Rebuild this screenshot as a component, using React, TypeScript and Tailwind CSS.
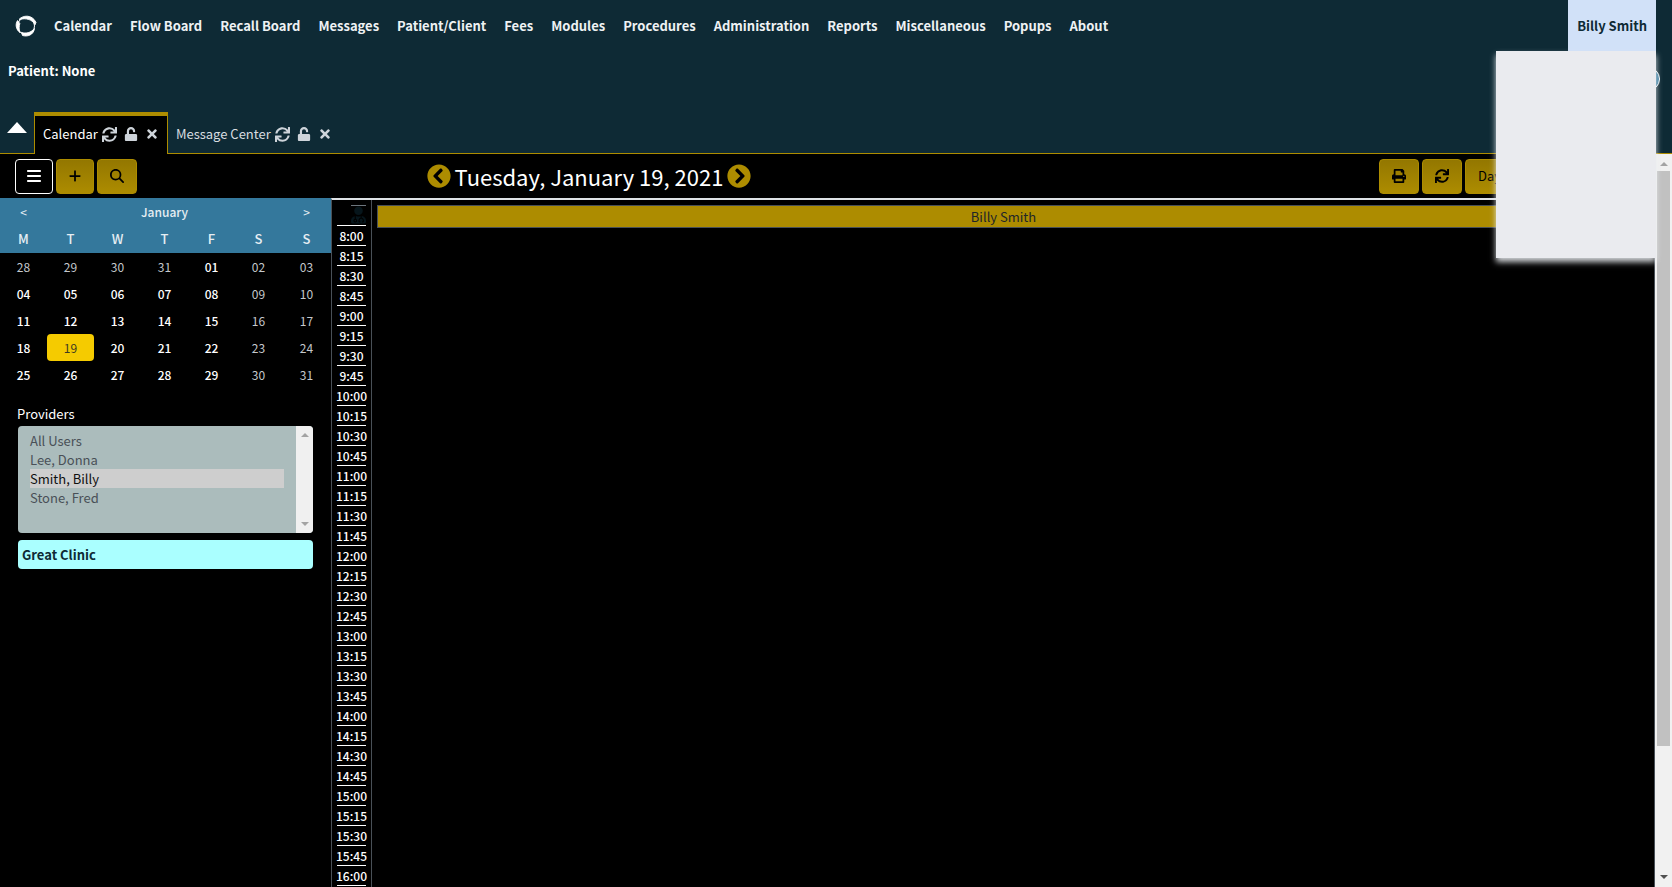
import React from "react";
import { FaSync, FaUnlock, FaTimes, FaPrint, FaUserMd, FaChevronCircleLeft, FaChevronCircleRight } from "react-icons/fa";
import { FaBars, FaPlus, FaMagnifyingGlass } from "react-icons/fa6";

const menu = [
  "Calendar", "Flow Board", "Recall Board", "Messages", "Patient/Client", "Fees", "Modules",
  "Procedures", "Administration", "Reports", "Miscellaneous", "Popups", "About",
];

const weeks = [
  ["28", "29", "30", "31", "01", "02", "03"],
  ["04", "05", "06", "07", "08", "09", "10"],
  ["11", "12", "13", "14", "15", "16", "17"],
  ["18", "19", "20", "21", "22", "23", "24"],
  ["25", "26", "27", "28", "29", "30", "31"],
];

const slots = Array.from({ length: 33 }, (_, i) => {
  const minutes = 8 * 60 + i * 15;
  return `${Math.floor(minutes / 60)}:${String(minutes % 60).padStart(2, "0")}`;
});

function dayClass(week: number, day: number) {
  if (week === 3 && day === 1) return "rounded bg-[#f5cb00] text-[#3d3a20]";
  if (day > 4 || (week === 0 && day < 4)) return "text-[#c4c8cc]";
  return "font-medium text-white";
}

function Logo() {
  return (
    <svg viewBox="0 0 24 24" className="size-6" fill="none" stroke="white">
      <circle cx="12" cy="12" r="8.500" strokeWidth="1" />
      <path d="M5 5.500C8.500 1.200 18 0 22 8.400L21 10.800C18.500 5.600 12.500 3.600 5 5.500Z" fill="white" strokeWidth="0.900" />
      <path d="M3.600 6.500C0.800 10.500 2.300 16 6 18.600C4.800 15 5 12.500 5.800 9.500Z" fill="white" strokeWidth="0.900" />
      <path d="M7.500 18.400C12 19.800 16.500 19 20.500 14.500C19.500 21 13.500 23 8.500 21.500Z" fill="white" strokeWidth="0.900" />
    </svg>
  );
}

function Tab({ label, active }: { label: string; active?: boolean }) {
  return (
    <div
      className={
        active
          ? "-mb-px flex h-[42px] items-center gap-1 border-x border-t-4 border-[#ad8c00] bg-black px-2 pb-[2px] text-white"
          : "flex h-[41px] items-center gap-1 border-t-4 border-transparent px-2 pb-px text-[#d8dde0]"
      }
    >
      <a href="#" className="leading-5">{label}</a>
      <div className="flex items-center gap-[7px] text-[#ced4da]">
        <button type="button" aria-label={`Refresh ${label}`}><FaSync className="size-[15px]" /></button>
        <button type="button" aria-label={`Lock ${label}`}><FaUnlock className="size-[14px]" /></button>
        <button type="button" aria-label={`Close ${label}`}><FaTimes className="size-[14px]" /></button>
      </div>
    </div>
  );
}

const goldButton =
  "flex h-[35px] items-center rounded border border-[#ad8c00] bg-linear-to-b from-[#937700] to-[#ad8c00] text-black";

export default function App() {
  return (
    <div className="relative flex h-screen flex-col overflow-hidden bg-black font-['Noto_Sans_CJK_SC',sans-serif] text-[13px] text-white">
      <header className="flex flex-col bg-[#0e2a35]">
        <div className="flex h-[51px] items-center pr-4 pl-[14px] font-bold">
          <Logo />
          <nav className="ml-4 flex flex-1 gap-[18px] whitespace-nowrap">
            {menu.map((m) => <a key={m} href="#" className="text-[#eef2f4]">{m}</a>)}
          </nav>
          <div className="relative z-10 h-[51px]">
            <button type="button" className="h-[51px] bg-[#d1e1f8] px-[9px] font-bold text-[#0e2a35]">Billy Smith</button>
            <div className="absolute top-[51px] right-0 h-[207px] w-[160px] bg-[#eaebef] shadow-[0_4px_6px_rgba(233,236,239,0.9)]" />
          </div>
        </div>
        <div className="flex h-[61px] items-start justify-between pr-3 pl-2">
          <p className="pt-[10px] font-bold leading-5">Patient: None</p>
          <button type="button" aria-label="Account" className="mt-4 size-6 rounded-full border border-white bg-[#34789c]" />
        </div>
        <div className="flex h-[42px] items-end border-b border-[#ad8c00]">
          <button type="button" aria-label="Collapse header" className="w-[34px] self-start pt-[10px] pl-[7px]">
            <svg viewBox="0 0 20 11" className="h-[11px] w-5" fill="white"><path d="M10 0 20 11H0Z" /></svg>
          </button>
          <Tab label="Calendar" active />
          <Tab label="Message Center" />
        </div>
      </header>

      <div className="flex min-h-0 flex-1">
        <main className="flex min-w-0 flex-1 flex-col">
          <div className="grid h-11 shrink-0 grid-cols-[331px_516px_1fr] items-center">
            <div className="flex gap-[3px] pl-[15px]">
              <button type="button" aria-label="Menu" className="flex h-[35px] w-[38px] items-center justify-center rounded border border-white"><FaBars className="size-4" /></button>
              <button type="button" aria-label="Add" className={`${goldButton} w-[38px] justify-center`}><FaPlus className="size-[14px]" /></button>
              <button type="button" aria-label="Search" className={`${goldButton} w-10 justify-center`}><FaMagnifyingGlass className="size-[14px]" /></button>
            </div>
            <div className="flex items-center justify-center gap-1">
              <button type="button" aria-label="Previous day" className="text-[#ad8c00]"><FaChevronCircleLeft className="size-6" /></button>
              <h1 className="text-[22px] leading-8 whitespace-nowrap">Tuesday, January 19, 2021</h1>
              <button type="button" aria-label="Next day" className="text-[#ad8c00]"><FaChevronCircleRight className="size-6" /></button>
            </div>
            <div className="flex justify-end gap-[3px]">
              <button type="button" aria-label="Print" className={`${goldButton} w-10 justify-center`}><FaPrint className="size-[14px]" /></button>
              <button type="button" aria-label="Refresh" className={`${goldButton} w-10 justify-center`}><FaSync className="size-[14px]" /></button>
              <button type="button" className={`${goldButton} mr-[130px] w-[60px] pl-3`}>Day</button>
            </div>
          </div>

          <div className="flex min-h-0 flex-1">
            <aside className="w-[331px] shrink-0">
              <table className="w-full table-fixed text-center text-xs">
                <colgroup>
                  <col span={6} className="w-[47px]" />
                  <col />
                </colgroup>
                <thead className="bg-[#34789c] text-[#e6eef3]">
                  <tr className="h-[27px]">
                    <td><button type="button" aria-label="Previous month">&lt;</button></td>
                    <td colSpan={5} className="font-medium">January</td>
                    <td><button type="button" aria-label="Next month">&gt;</button></td>
                  </tr>
                  <tr className="h-7">
                    {["M", "T", "W", "T", "F", "S", "S"].map((d, i) => <th key={i} className="text-[13px] font-medium">{d}</th>)}
                  </tr>
                </thead>
                <tbody>
                  {weeks.map((week, w) => (
                    <tr key={w} className="h-[27px]">
                      {week.map((d, i) => (
                        <td key={i} className="p-0">
                          <button type="button" className={`h-[27px] w-full ${dayClass(w, i)}`}>{d}</button>
                        </td>
                      ))}
                    </tr>
                  ))}
                </tbody>
              </table>
              <div className="flex flex-col px-[18px] pt-4">
                <label htmlFor="providers" className="-ml-px h-[22px] leading-5">Providers</label>
                <div className="flex h-[107px] overflow-hidden rounded bg-[#abbcbc]">
                  <select id="providers" multiple defaultValue={["smith"]} className="flex-1 overflow-hidden bg-transparent px-3 pt-[5px] text-[13px] text-[#495057] outline-none">
                    <option value="all" className="h-[19px] leading-[19px]">All Users</option>
                    <option value="lee" className="h-[19px] leading-[19px]">Lee, Donna</option>
                    <option value="smith" className="h-[19px] leading-[19px]">Smith, Billy</option>
                    <option value="stone" className="h-[19px] leading-[19px]">Stone, Fred</option>
                  </select>
                  <div className="flex w-[17px] flex-col items-center justify-between bg-[#f0f0f0] py-[7px]">
                    <svg viewBox="0 0 8 4" className="h-1 w-2" fill="#a3a3a3"><path d="M4 0 8 4H0Z" /></svg>
                    <svg viewBox="0 0 8 4" className="h-1 w-2" fill="#a3a3a3"><path d="M4 4 8 0H0Z" /></svg>
                  </div>
                </div>
                <button type="button" className="mt-[7px] h-[29px] rounded bg-[#aaffff] px-1 text-left font-bold text-[#0e2a35]">Great Clinic</button>
              </div>
            </aside>

            <section className="flex min-w-0 flex-1 overflow-hidden border-x border-t-2 border-x-[#495057] border-t-[#dee2e6]">
              <div className="w-10 shrink-0 border-r border-[#495057] px-[5px]">
                <div className="flex h-[26px] justify-end border-b border-white pt-[5px] text-[#06151b]">
                  <div className="h-5 w-[15px] border-t border-[#6c757d]"><FaUserMd className="h-[18px] w-[15px]" /></div>
                </div>
                <ol>
                  {slots.map((s) => (
                    <li key={s} className="flex h-5 items-center justify-center border-b border-white text-xs leading-[18px] font-medium">{s}</li>
                  ))}
                </ol>
              </div>
              <div className="min-w-0 flex-1 pt-[5px] pr-6 pl-[5px]">
                <h2 className="flex h-[23px] items-center justify-center border border-[#495057] bg-[#ad8c00] text-[#212529]">Billy Smith</h2>
              </div>
            </section>
          </div>
        </main>

        <div className="flex w-[17px] shrink-0 flex-col items-center bg-[#f1f1f1] pt-2 pb-2">
          <svg viewBox="0 0 8 4" className="h-1 w-2" fill="#a3a3a3"><path d="M4 0 8 4H0Z" /></svg>
          <div className="mt-[5px] mb-5 flex w-[13px] flex-1 flex-col">
            <div className="basis-[84%] bg-[#c1c1c1]" />
          </div>
          <svg viewBox="0 0 8 4" className="h-1 w-2" fill="#505050"><path d="M4 4 8 0H0Z" /></svg>
        </div>
      </div>
    </div>
  );
}
